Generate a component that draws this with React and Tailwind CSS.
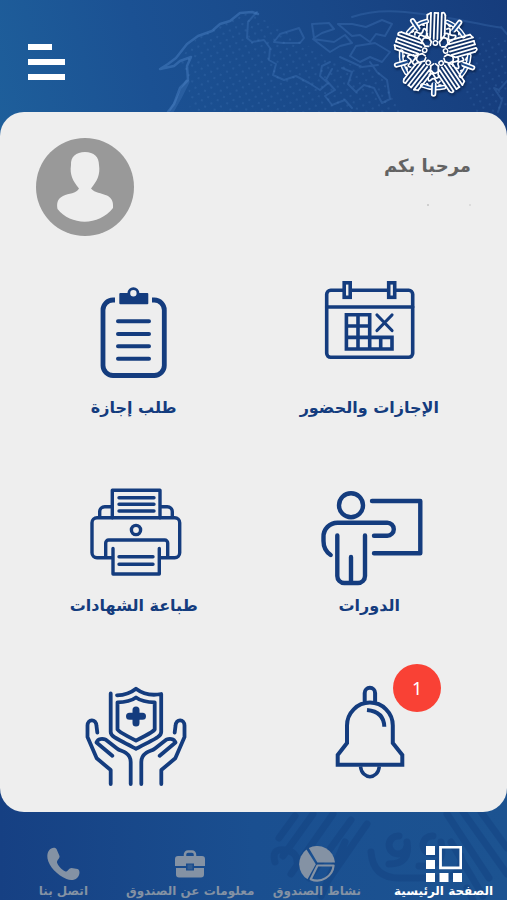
const FONT = "font-['DejaVu_Sans','Noto_Sans',sans-serif]"

function Emblem({ className, core = '#1a4a8c' }) {
  return (
    <svg viewBox="-44 -44 88 88" className={className} fill="none" strokeLinecap="round" strokeLinejoin="round" aria-hidden="true">
      {[2, 74, 146, 218, 290].map(angle => (
        <g key={angle} transform={`rotate(${angle})`}>
          <path d="M11 -32.500A34 34 0 0 1 28 -19" stroke="currentColor" strokeWidth="4.800" />
          <path d="M11 -32.500A34 34 0 0 1 28 -19" stroke={core} strokeWidth="1.900" />
          <g transform="rotate(36)">
            <path d="M0 -40V-31" stroke="currentColor" strokeWidth="5.400" />
            <path d="M0 -40V-29" stroke={core} strokeWidth="2" />
            <path d="M-6 -27Q-4 -31 -2 -27T3 -26Q6 -29 6 -24M-5 -22Q-2 -26 0 -22T5 -21M-3 -18Q0 -21 3 -17M-7 -31H-5M6 -31L7 -30" stroke="currentColor" strokeWidth="1.800" />
          </g>
          <path d="M-9 -39V-19L-4 -12M-5.400 -41V-16M-1.800 -41V-15M1.800 -41V-15M5.400 -41V-16M9 -39V-19L4 -12" stroke="currentColor" strokeWidth="1.800" />
          <path d="M-9 -39L-5.400 -41M-1.800 -41H1.800M5.400 -41Q7.500 -43 9 -39" stroke="currentColor" strokeWidth="1.700" />
          <circle cx="0" cy="-11" r="2.200" stroke="currentColor" strokeWidth="1.500" />
          <path d="M4 -12L5 -8.500M-4 -12L-5 -8.500" stroke="currentColor" strokeWidth="1.600" />
        </g>
      ))}
    </svg>
  )
}

function MapBackdrop() {
  return (
    <svg viewBox="0 0 507 136" preserveAspectRatio="xMaxYMin slice" className="absolute inset-0 size-full" fill="none" aria-hidden="true">
      <defs>
        <pattern id="dots" width="10" height="10" patternUnits="userSpaceOnUse" patternTransform="rotate(18)">
          <circle cx="3" cy="3" r="1" fill="#5b8fcf" />
          <circle cx="8" cy="8" r="1" fill="#5b8fcf" />
        </pattern>
      </defs>
      <path d="M190 112L188 80L178 62L195 40L220 24L250 12L290 34L330 60L380 70L400 112ZM450 30L507 40V112H470Z" fill="url(#dots)" opacity="0.22" />
      <g stroke="#5288cb" strokeLinejoin="round" strokeLinecap="round">
        <path d="M168 112L174 104L180 88L188 80L187 66L191 57L180 61L174 66L160 69L168 64L176 58L187 44L198 36L212 31L220 24L230 21L240 13L252 12L258 14" strokeWidth="2.500" opacity="0.42" />
        <path d="M172 110L180 96L187 82" strokeWidth="5" opacity="0.25" />
        <path d="M257 12L248 22L247 38L252 42L264 40L270 48L269 60L276 64L273 75L284 80L296 76L309 83L320 90L328 83L320 76L322 66L330 62M274 42L280 34L299 28L304 38L300 43L283 43ZM312 24L329 23L334 29L322 33L314 38ZM313 39L334 42L345 35L352 43L340 46L330 52ZM338 24L352 24L366 27L382 20L392 24L385 36L376 34L370 42L360 35L352 36ZM356 46L375 43L390 52L382 62L370 57L360 62L350 56ZM332 69L326 80L335 90L325 96L332 105L345 100L352 108M342 68L352 72L348 84L356 92L364 85L374 88L382 103L390 99L387 80L377 72L370 62M340 57L362 67L378 65" strokeWidth="2" opacity="0.28" />
        <path d="M352 17Q375 9 405 12T470 22T501 27L507 34M507 81L499 90L494 88L502 100L498 112" strokeWidth="2" opacity="0.24" />
      </g>
    </svg>
  )
}

function IconBox({ children, strokeWidth = 4 }) {
  return (
    <svg
      viewBox="0 0 120 112"
      className="h-28 w-30 overflow-visible"
      fill="none"
      stroke="currentColor"
      strokeWidth={strokeWidth}
      strokeLinecap="round"
      strokeLinejoin="round"
      aria-hidden="true"
    >
      {children}
    </svg>
  )
}

function CalendarIcon() {
  return (
    <IconBox strokeWidth={3.6}>
      <rect x="17.700" y="10.300" width="86" height="67" rx="4" />
      <path d="M17.700 27H103.700" />
      <g fill="#eeeeee" strokeLinejoin="miter">
        <rect x="35.200" y="2.800" width="6" height="14.500" />
        <rect x="79.700" y="2.800" width="6" height="14.500" />
      </g>
      <path d="M37.400 34.700H60.700V69H37.400ZM49 34.700V69M37.400 46H60.700M37.400 57.400H83V69H60.700M71.700 57.400V69" strokeLinejoin="miter" />
      <path d="M68 35L83 50.500M83 35L68 50.500" strokeWidth="3.200" />
    </IconBox>
  )
}

function ClipboardIcon() {
  return (
    <IconBox>
      <path d="M41 20H39a10 10 0 0 0-10 10V85.500a10 10 0 0 0 10 10H80.300a10 10 0 0 0 10-10V30a10 10 0 0 0-10-10H78" strokeLinecap="butt" strokeWidth="4.800" />
      <rect x="45.300" y="13" width="29" height="11.300" rx="1" fill="currentColor" stroke="none" />
      <circle cx="59.400" cy="13.300" r="4.600" fill="#eeeeee" strokeWidth="2.800" />
      <path d="M44 41.300H75M44 54H75M44 66.300H75M44 78.700H75" />
    </IconBox>
  )
}

function TrainingIcon() {
  return (
    <IconBox strokeWidth={4.4}>
      <circle cx="42" cy="27.300" r="12" />
      <path d="M63 23H111.300V75.300H65" />
      <path d="M21.700 77C16.500 73.500 14.500 69 14.500 63V59A14 14 0 0 1 28.500 44.700H78.300a6.500 6.500 0 0 1 0 13H65" />
      <path d="M28.300 57.500V98a7 7 0 0 0 7 7H49a7 7 0 0 0 7-7V57.500M42 79V104" />
    </IconBox>
  )
}

function PrinterIcon() {
  return (
    <IconBox strokeWidth={3.4}>
      <path d="M37.700 79.700H23a5 5 0 0 1-5-5V44.700a5 5 0 0 1 5-5H100.700a5 5 0 0 1 5 5V74.700a5 5 0 0 1-5 5H86" />
      <path d="M38.300 39.700V12.300H86V39.700M38 28.700H30.700a5 5 0 0 0-5 5V39M86 28.700H93.300a5 5 0 0 1 5 5V39" />
      <path d="M45 19.700H80M45 26.300H80M45 33H80" />
      <circle cx="62" cy="52" r="4.600" />
      <path d="M31.700 79V65a3 3 0 0 1 3-3H90.700a3 3 0 0 1 3 3V79" />
      <path d="M39 70.500V96H85.300V70.500M45 78.700H79M45 86.300H79" />
    </IconBox>
  )
}

function BellIcon() {
  return (
    <IconBox>
      <path d="M55.700 25V17a5.200 5.200 0 0 1 10.400 0V25" />
      <path d="M38 67V49.500a22.900 22.900 0 0 1 45.800 0V67L93.300 79V88.700H28.700V79Z" strokeLinejoin="miter" />
      <path d="M58 34C69 35 75 41 75.300 50.700" strokeLinecap="butt" />
      <path d="M51.500 90.500C53 104 69 104 70.300 90.500" strokeLinecap="butt" strokeWidth="3.500" />
    </IconBox>
  )
}

function InsuranceIcon() {
  const hand = 'M36.700 108V94L22.700 82.300L13.500 61V49.500C13.500 43 22 42 22.500 50L23.300 56.500M38.300 79.700L22.500 66.500C24 62.500 28.500 62.500 31.500 63.500L43 72.500C46 75 49 74.500 52 77C55.500 79.500 56.700 82 56.700 86V108'
  return (
    <IconBox strokeWidth={3.8}>
      <path d="M36.700 17.500V56C36.700 60 39 61 62 72.800C85 61 87.200 60 87.200 56V18C78 19.800 69 18 62 12.700C56 17.500 51 19 43 19.300" />
      <path d="M62 21.500C56.500 25.500 51 26.300 43.500 26.300V53.500C46 57 52 59 62 64.700C72 59 78 57 80.700 53.500V26.300C73 26.300 67.500 25.500 62 21.500Z" />
      <path d="M62 34V47M55.500 40.300H68.500" strokeWidth="7" />
      <path d={hand} />
      <path d={hand} transform="matrix(-1 0 0 1 124 0)" />
    </IconBox>
  )
}

function HomeNavIcon() {
  return (
    <svg viewBox="0 0 36 36" className="size-9" fill="currentColor" aria-hidden="true">
      <path d="M0 0h9v9H0zM0 14h9v9H0zM0 27h9v9H0zM13.500 27h9v9h-9zM27 27h9v9h-9z" />
      <path d="M14.500 1.200H34.800V21.800H14.500Z" fill="none" stroke="currentColor" strokeWidth="2.800" />
    </svg>
  )
}

function PieNavIcon() {
  return (
    <svg viewBox="0 0 36 36" className="size-9" fill="currentColor" aria-hidden="true">
      <path d="M7.500 3.500A18 18 0 0 0 8.500 33.200L16.800 18.200Z" />
      <path d="M9.800 2A18 18 0 0 1 36 16.500H18.400Z" />
      <path d="M18.500 19.500H34.600A16.500 16.500 0 0 1 11.700 33.200Z" fill="none" stroke="currentColor" strokeWidth="2.200" strokeLinejoin="round" />
    </svg>
  )
}

function BriefcaseNavIcon() {
  return (
    <svg viewBox="0 0 36 36" className="size-9" fill="currentColor" aria-hidden="true">
      <path d="M13 11V8.500a3 3 0 0 1 3-3h4a3 3 0 0 1 3 3V11" fill="none" stroke="currentColor" strokeWidth="2.500" />
      <path d="M6 10H30a3 3 0 0 1 3 3V20H22V17.500H14V20H3V13a3 3 0 0 1 3-3Z" />
      <path d="M4 22H14V24.500H22V22H32V28.500a3 3 0 0 1-3 3H7a3 3 0 0 1-3-3Z" />
      <rect x="15.500" y="18.500" width="5" height="5" rx="0.500" opacity="0.25" />
    </svg>
  )
}

function PhoneNavIcon() {
  return (
    <svg viewBox="0 0 36 36" className="size-9" fill="currentColor" aria-hidden="true">
      <path d="M4 4.500C6 1.500 10 .7 11.500 3L14.500 10C15.200 12 11.500 14.500 12 16.500C13 20 16.500 23.500 20.500 25.500C22.500 26 24 22 26.500 22L32.500 23C35.500 24 35 29.500 32 32C29.500 34.500 25 34.500 21.500 33C12 29 4 20.500 2.500 12.500C2 9 2.500 6.500 4 4.500Z" />
    </svg>
  )
}

const services = [
  { id: 'attendance', label: 'الإجازات والحضور', Icon: CalendarIcon },
  { id: 'leave', label: 'طلب إجازة', Icon: ClipboardIcon },
  { id: 'training', label: 'الدورات', Icon: TrainingIcon },
  { id: 'certificates', label: 'طباعة الشهادات', Icon: PrinterIcon },
  { id: 'alerts', Icon: BellIcon, badge: 1 },
  { id: 'insurance', Icon: InsuranceIcon },
]

const navItems = [
  { id: 'home', label: 'الصفحة الرئيسية', Icon: HomeNavIcon, active: true },
  { id: 'activity', label: 'نشاط الصندوق', Icon: PieNavIcon },
  { id: 'about', label: 'معلومات عن الصندوق', Icon: BriefcaseNavIcon },
  { id: 'contact', label: 'اتصل بنا', Icon: PhoneNavIcon },
]

// runs 24px under the rounded top of the card
function Header() {
  return (
    <header className="relative -mb-6 h-34 overflow-hidden bg-[linear-gradient(75deg,#1e5f9b_0%,#1b5193_30%,#194888_65%,#163c7c_100%)]">
      <MapBackdrop />
      <div className="relative flex items-start justify-between px-7 pt-2.5">
        <Emblem className="size-[88px] text-white drop-shadow-[1px_2px_1px_#0a2450]" />
        <button type="button" className="mt-8 flex flex-col items-end gap-[9px] py-0.5">
          <span className="h-1.5 w-6 bg-white" />
          <span className="h-1.5 w-[37px] bg-white" />
          <span className="h-1.5 w-[37px] bg-white" />
        </button>
      </div>
    </header>
  )
}

function Welcome() {
  return (
    <div className="flex items-start justify-between px-9">
      <div className="pt-3">
        <p className="text-lg leading-8 font-bold text-[#636363]">مرحبا بكم</p>
        <div className="mt-5.5 flex gap-10">
          <span className="size-0.5 bg-[#dcdcdc]" />
          <span className="size-0.5 bg-[#cfcfcf]" />
        </div>
      </div>
      <svg viewBox="0 0 98 98" className="size-[98px]" aria-hidden="true">
        <circle cx="49" cy="49" r="49" fill="#999999" />
        <path d="M49 14C40 14 34.500 19 35 27C33.500 37 37 43 43 50.500C40 56 33 55 27 58C21 61 20.500 66 21.500 71C35 88 63 88 77 70C77.500 64 76 60 71 57.500C65 55 59 55 55 50.500C61 43 64.500 37 63 27C63 19 58 14 49 14Z" fill="#eeeeee" />
      </svg>
    </div>
  )
}

function ServiceTile({ label, Icon, badge }) {
  return (
    <button type="button" className="flex flex-col items-center text-[#143c7e]">
      <span className="relative">
        <Icon />
        {badge && (
          <span className="absolute -top-3 left-21 flex size-12 items-center justify-center rounded-full bg-[#f94135] font-['Noto_Sans',sans-serif] text-lg text-white">
            {badge}
          </span>
        )}
      </span>
      {label && <span className="text-base leading-8 font-bold whitespace-nowrap">{label}</span>}
    </button>
  )
}

function NavBackdrop() {
  return (
    <svg
      viewBox="0 0 240 88"
      preserveAspectRatio="xMaxYMin slice"
      className="absolute inset-y-0 right-0 h-full w-60"
      fill="none"
      stroke="#123f7e"
      strokeWidth="7"
      strokeLinecap="round"
      opacity="0.4"
      aria-hidden="true"
    >
      <path d="M12 26L28 4M8 50Q4 36 18 38T30 54M46 2L16 44M66 2L24 62M84 8L42 66M100 12L60 70M78 30L54 84" />
      <path d="M132 24a9 9 0 1 0 8 10M140 30Q144 52 122 52M166 24a9 9 0 1 0 8 10M174 30Q180 56 152 54M104 40Q106 66 132 66H178Q196 62 194 44" />
      <path d="M180 2L222 66M196 0L240 62M214 0L240 36M184 30L216 84M200 76L206 88" />
    </svg>
  )
}

function BottomNav() {
  return (
    <nav className="relative overflow-hidden">
      <NavBackdrop />
      <div className="relative grid grid-cols-4 pt-[34px]">
        {navItems.map(({ id, label, Icon, active }) => (
          <a
            key={id}
            href={`#${id}`}
            className={`flex flex-col items-center ${active ? 'text-white' : 'text-[#8492a4]'}`}
          >
            <Icon />
            <span className="text-xs leading-[18px] font-bold whitespace-nowrap">{label}</span>
          </a>
        ))}
      </div>
    </nav>
  )
}

export default function App() {
  return (
    <div dir="rtl" className={`min-h-screen bg-linear-to-r from-[#164083] via-[#1a4f90] to-[#1c5391] ${FONT}`}>
      <Header />
      <main className="relative rounded-3xl bg-[#eeeeee] pt-[26px] pb-6">
        <Welcome />
        <div className="mt-11 grid grid-cols-2 gap-y-[54px] pr-5 pl-4">
          {services.map(service => (
            <ServiceTile key={service.id} {...service} />
          ))}
        </div>
      </main>
      <BottomNav />
    </div>
  )
}
